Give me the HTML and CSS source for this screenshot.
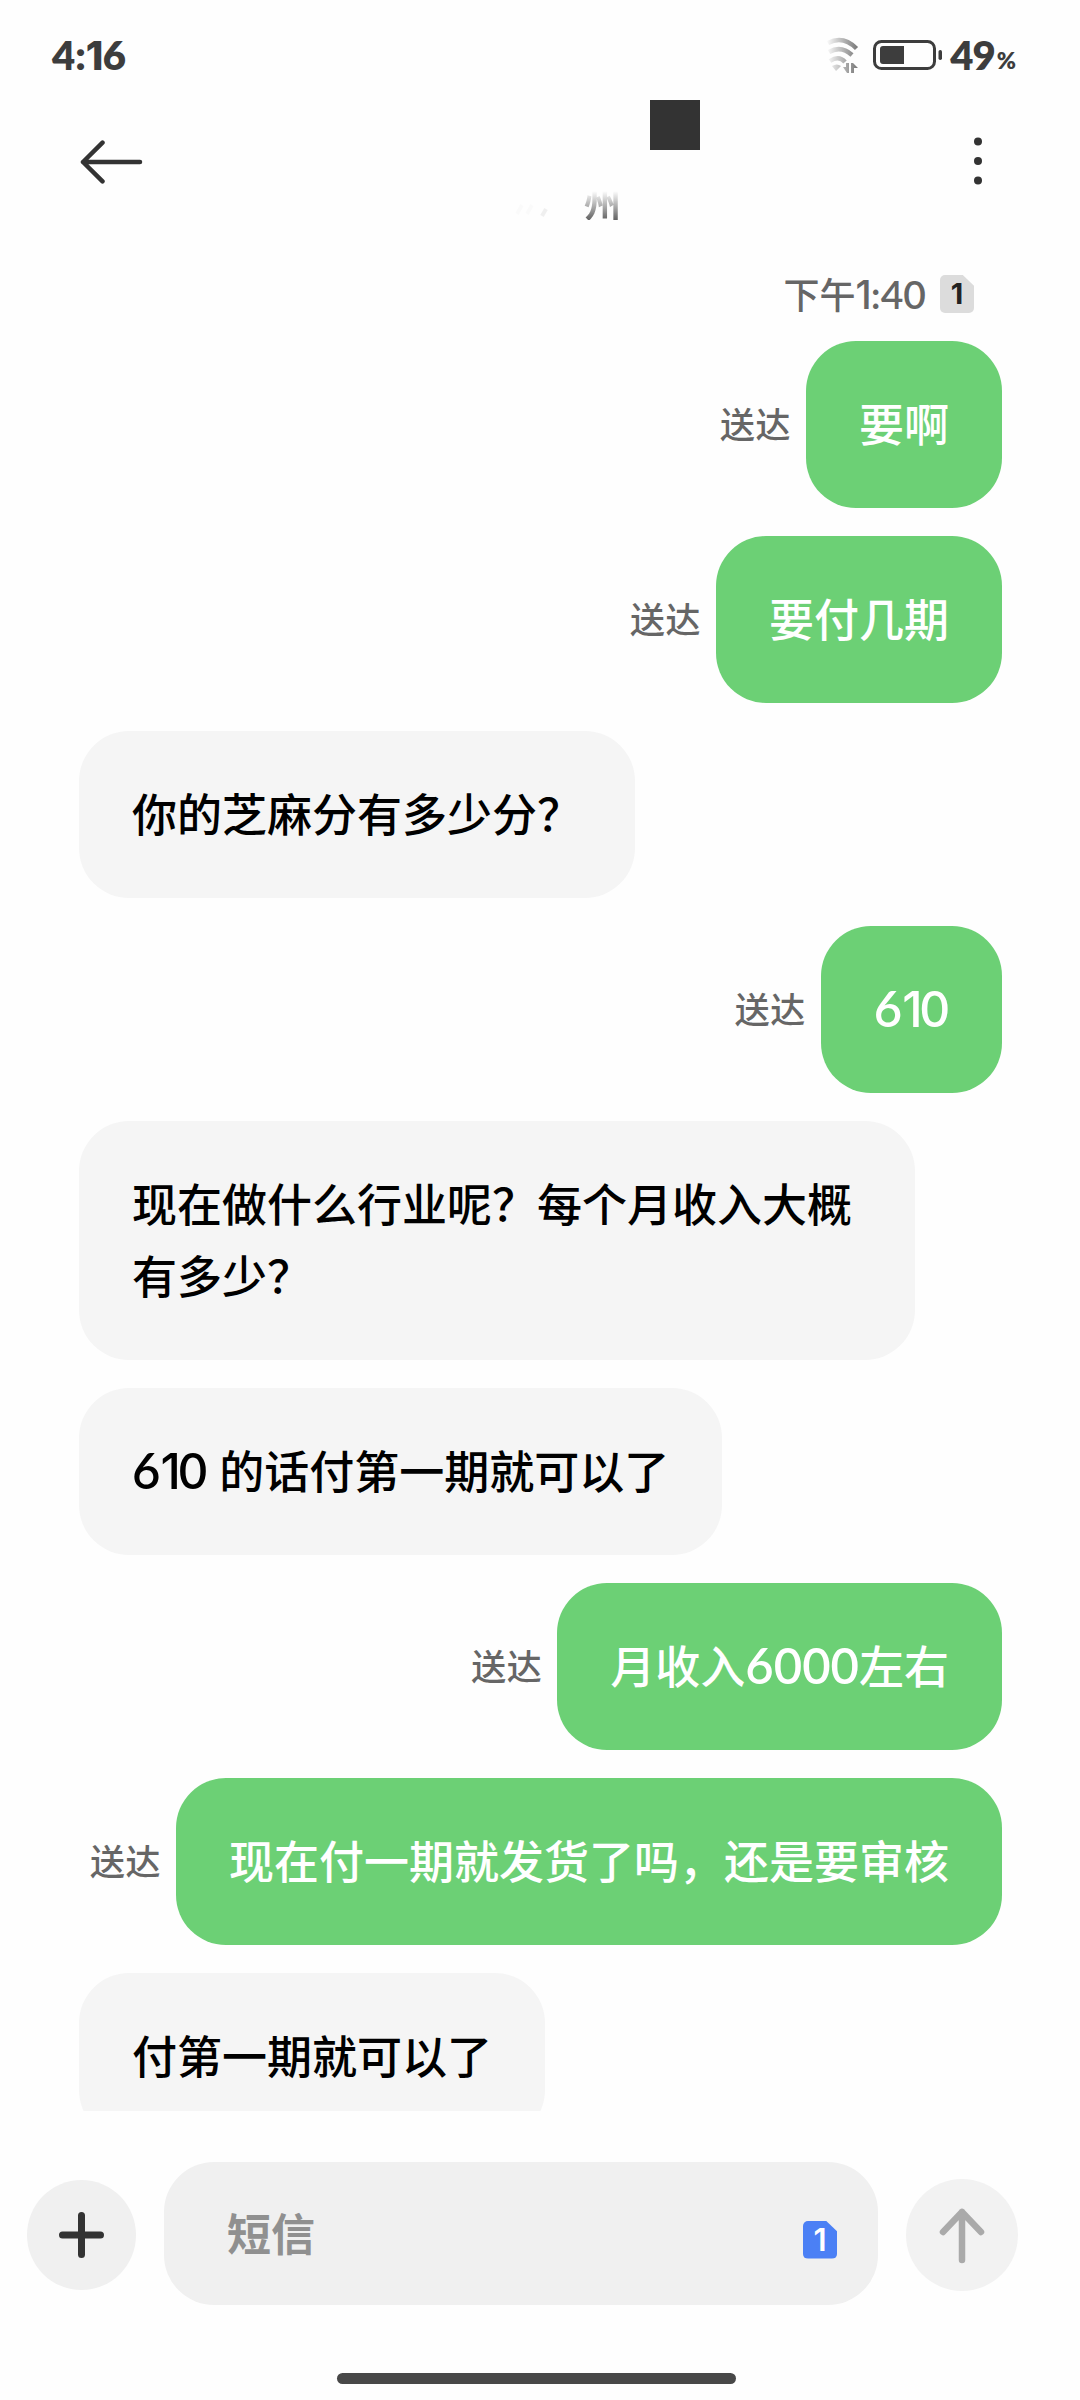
FILE: index.html
```html
<!DOCTYPE html>
<html lang="zh-CN">
<head>
<meta charset="utf-8">
<title>短信</title>
<link rel="stylesheet" href="styles.css">
</head>
<body>
<div class="phone">
  <div class="status">
    <span class="clock">4:<span class="one">1</span>6</span>
    <div class="status-right">
      <svg class="wifi" width="33" height="38" viewBox="0 0 33 38">
        <defs><linearGradient id="fade" gradientUnits="userSpaceOnUse" x1="0" y1="0" x2="32" y2="0"><stop offset="0" stop-color="#3d3d3d" stop-opacity="0"/><stop offset="1" stop-color="#3d3d3d" stop-opacity=".7"/></linearGradient></defs>
        <g fill="none" stroke="url(#fade)" stroke-width="4.500">
          <path d="M2 7Q17 -1 30.500 12.500"/>
          <path d="M3 16Q15 9 26 19"/>
          <path d="M4 25Q13 19 19 26"/>
        </g>
        <path fill="url(#fade)" d="M6 30q5-3 9 0l-5 5zM17 31h3v-4h3v10h-2zM25 37V27h2l5 5h-4v5z"/>
      </svg>
      <svg class="battery" width="70" height="30" viewBox="0 0 70 30">
        <rect x="1.500" y="1.500" width="60" height="27" rx="7" fill="none" stroke="#3d3d3d" stroke-width="3"/>
        <path fill="#3d3d3d" d="M10 6h21v18H10a3 3 0 0 1-3-3V9a3 3 0 0 1 3-3z"/>
        <rect x="65.500" y="10" width="3.500" height="10" rx="1.700" fill="#3d3d3d"/>
      </svg>
      <span class="level">49</span><span class="percent">%</span>
    </div>
  </div>

  <header class="header">
    <svg class="back" width="64" height="44" viewBox="0 0 64 44" fill="none" stroke="#333" stroke-width="4.500" stroke-linecap="round" stroke-linejoin="round"><path d="M61 22H4M23.500 2.700L4 22l19.500 19.300"/></svg>
    <div class="contact">
      <span class="mask"></span>
      <div class="region">
        <svg width="36" height="36" viewBox="0 0 36 36" fill="none" stroke="#000" stroke-width="4"><path stroke-opacity=".015" d="M4 30l5-9M14 30l5-9"/><path stroke-opacity=".06" d="M29 32l4-7"/></svg>
        <span class="city">州</span>
      </div>
    </div>
    <svg class="more" width="10" height="50" viewBox="0 0 10 50" fill="#333"><circle cx="5" cy="5.500" r="4"/><circle cx="5" cy="25" r="4"/><circle cx="5" cy="44.500" r="4"/></svg>
  </header>

  <main class="thread">
    <div class="stamp">
      <span>下午<span class="stamp-digits"><span class="one">1</span>:40</span></span>
      <span class="sim sim-grey">1</span>
    </div>
    <div class="row sent"><span class="state">送达</span><p class="bubble">要啊</p></div>
    <div class="row sent"><span class="state">送达</span><p class="bubble">要付几期</p></div>
    <div class="row"><p class="bubble">你的芝麻分有多少分？</p></div>
    <div class="row sent"><span class="state">送达</span><p class="bubble"><span class="num">6<span class="one">1</span>0</span></p></div>
    <div class="row"><p class="bubble">现在做什么行业呢？每个月收入大概有多少？</p></div>
    <div class="row"><p class="bubble"><span class="num">6<span class="one">1</span>0</span> 的话付第一期就可以了</p></div>
    <div class="row sent"><span class="state">送达</span><p class="bubble">月收入<span class="num">6000</span>左右</p></div>
    <div class="row sent"><span class="state">送达</span><p class="bubble">现在付一期就发货了吗，还是要审核</p></div>
    <div class="row"><p class="bubble">付第一期就可以了</p></div>
  </main>

  <footer class="composer">
    <div class="round add"><svg width="50" height="50" viewBox="0 0 50 50" stroke="#333" stroke-width="7" stroke-linecap="round"><path d="M24.500 5.500v39M5.500 25h38"/></svg></div>
    <div class="field"><span class="hint">短信</span><span class="sim sim-blue">1</span></div>
    <div class="round send"><svg width="50" height="58" viewBox="0 0 50 58" fill="none" stroke="#aaa" stroke-width="6.500" stroke-linecap="round" stroke-linejoin="round"><path d="M25 54V6M6 26L25 6l19 20"/></svg></div>
  </footer>
  <div class="home"></div>
</div>
</body>
</html>
```
FILE: styles.css
```css
* { box-sizing: border-box; }
body { margin: 0; background: #fefefe; }
.phone {
  width: 1080px;
  height: 2400px;
  display: flex;
  flex-direction: column;
  overflow: hidden;
  font-family: "Noto Sans CJK SC", "Noto Sans", sans-serif;
}
.one { font-family: Inter, sans-serif; letter-spacing: -0.02em; }

.status {
  height: 100px;
  padding: 5px 64px 0 52px;
  display: flex;
  justify-content: space-between;
  color: #3d3d3d;
  font-family: Lato, sans-serif;
  font-weight: 800;
}
.clock { font-size: 40px; line-height: 100px; }
.status-right { display: flex; height: 100px; align-items: center; }
.wifi { margin-right: 14px; }
.battery { margin-right: 7px; }
.level { font-size: 40px; letter-spacing: -1px; }
.percent { font-size: 23px; padding-top: 10px; margin-left: 2px; }

.header {
  height: 125px;
  padding: 0 97px 0 79px;
  display: flex;
}
.back { margin-top: 40px; }
.more { margin-top: 36px; margin-left: auto; }
.contact {
  width: 187px;
  margin-left: 370px;
  display: flex;
  flex-direction: column;
}
.mask { width: 50px; height: 50px; background: #333; align-self: flex-end; }
.region {
  display: flex;
  gap: 35px;
  margin-top: 34px;
}
.city {
  font-size: 37px;
  line-height: 36px;
  font-weight: 700;
  background: linear-gradient(rgba(80, 80, 80, 0) 20%, #666 98%);
  background-clip: text;
  color: transparent;
}

.thread {
  height: 1886px;
  padding: 42px 78px 0 79px;
  overflow: hidden;
}
.stamp {
  height: 52px;
  margin: 0 28px 22px 0;
  display: flex;
  justify-content: flex-end;
  align-items: center;
  gap: 14px;
  color: #666;
  font-size: 36px;
  font-weight: 500;
}
.stamp-digits { font-family: Lato, sans-serif; font-size: 39px; font-weight: 600; }
.stamp-digits .one { font-weight: 500; }
.sim {
  width: 34px;
  height: 38px;
  border-radius: 5px;
  clip-path: polygon(0 0, 67% 0, 100% 28%, 100% 100%, 0 100%);
  font-family: Inter, sans-serif;
  font-size: 29px;
  line-height: 38px;
  text-align: center;
  font-weight: 700;
}
.sim-grey { margin-top: 2px; background: #dcdcdc; color: #222; }
.sim-blue { background: #4b80f5; color: #fff; font-size: 31px; font-weight: 600; }

.row { display: flex; align-items: center; margin-bottom: 28px; }
.sent { justify-content: flex-end; gap: 15px; }
.bubble {
  margin: 0;
  max-width: 836px;
  min-height: 167px;
  padding: 46px 53px 49px;
  border-radius: 50px;
  background: #f5f5f5;
  color: #000;
  font-size: 45px;
  line-height: 72px;
  font-weight: 500;
  word-spacing: 2px;
}
.sent .bubble { background: #6cd075; color: #fff; }
.state {
  padding-bottom: 3px;
  color: #666;
  font-size: 35px;
  font-weight: 500;
  letter-spacing: 0.5px;
  line-height: 50px;
}
.num { font-family: Lato, sans-serif; font-size: 49px; font-weight: 600; line-height: 1; }
.num .one { font-weight: 500; letter-spacing: -2px; }

.composer {
  height: 143px;
  margin: 51px 62px 0 27px;
  display: flex;
  align-items: center;
}
.round { display: flex; align-items: center; justify-content: center; border-radius: 50%; }
.add { width: 109px; height: 110px; margin-top: 3px; background: #f0f0f0; }
.send { width: 112px; height: 112px; margin-top: 3px; background: #f2f2f2; }
.field {
  width: 714px;
  height: 143px;
  margin: 0 28px 0 28px;
  padding: 0 41px 0 63px;
  display: flex;
  align-items: center;
  justify-content: space-between;
  border-radius: 50px;
  background: #f0f0f0;
  color: #909090;
  font-size: 44px;
  font-weight: 700;
}
.hint { padding-bottom: 3px; }
.field .sim { margin-top: 12px; }
.home { width: 399px; height: 11px; margin: 68px 0 0 337px; border-radius: 6px; background: #484848; }
```
